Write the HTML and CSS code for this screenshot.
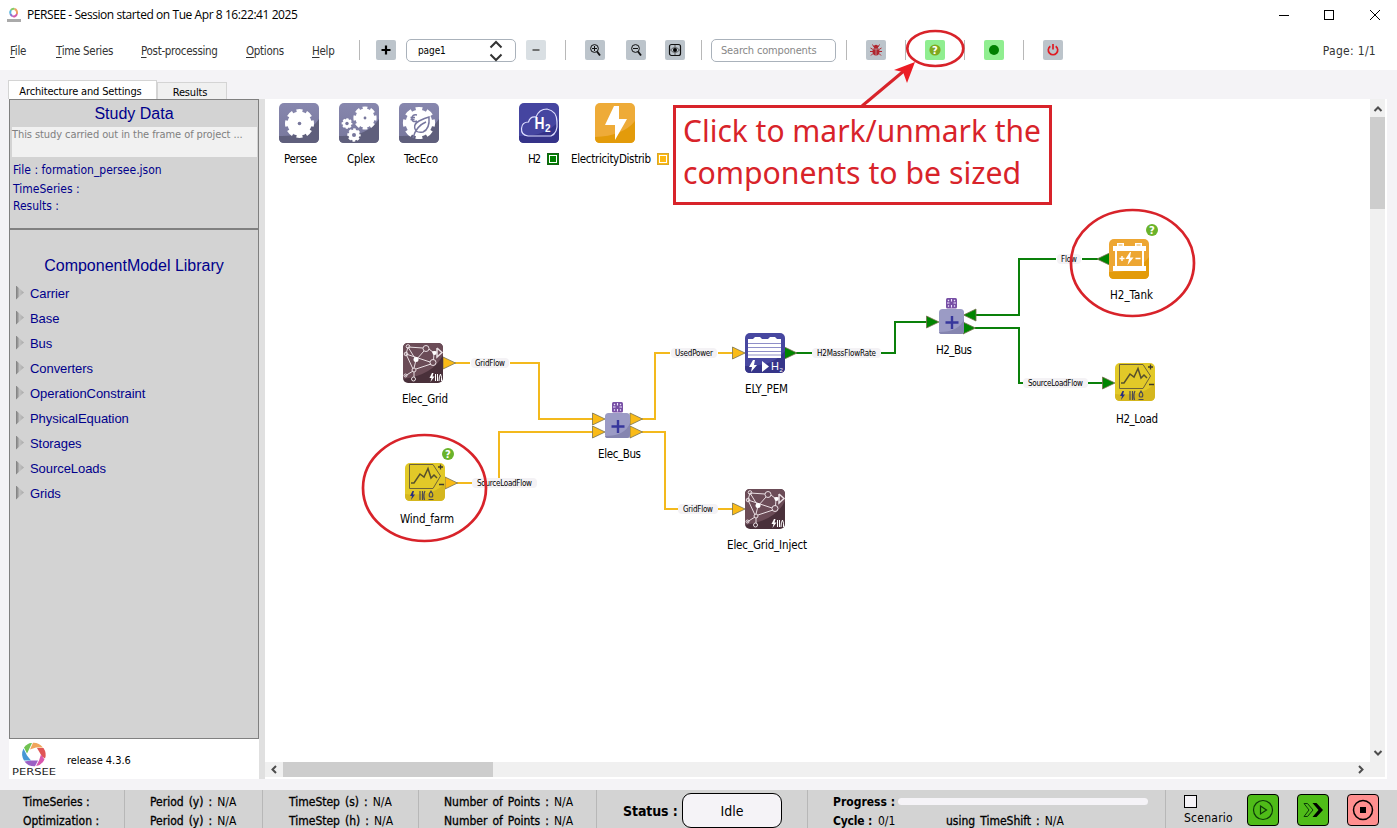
FILE: index.html
```html
<!DOCTYPE html>
<html lang="en">
<head>
<meta charset="utf-8">
<title>PERSEE</title>
<link rel="stylesheet" href="styles.css">
</head>
<body>
<div class="window">
  <header class="titlebar">
    <svg class="app-icon" width="16" height="18" viewBox="0 0 16 18"><path d="M4.500 8A3.600 4 0 0 1 5 4" stroke="#59b6df"/><path d="M5 4Q6.500 2.300 8.500 3" stroke="#86cc65"/><path d="M8.500 3Q11.500 4 11 8" stroke="#eda063"/><path d="M11 8Q9 11.500 6.500 10" stroke="#d45ba8"/><path d="M6.500 10Q5 9.500 4.500 8" stroke="#8a6fd0"/><path d="M1 14.500H15" stroke="#aaa" stroke-width="3"/></svg>
    <span class="title">PERSEE - Session started on Tue Apr 8 16:22:41 2025</span>
    <svg class="win-controls" width="104" height="12" viewBox="0 0 104 12" shape-rendering="crispEdges"><path d="M1 6.500H11M46.500 1.500H55.500V10.500H46.500Z"/><path d="M92 1L102 11M102 1L92 11" shape-rendering="auto"/></svg>
  </header>

  <nav class="toolbar">
    <div class="menus">
      <span class="m-file"><u>F</u>ile</span><span class="m-time"><u>T</u>ime Series</span><span class="m-post"><u>P</u>ost-processing</span><span class="m-opt"><u>O</u>ptions</span><span class="m-help"><u>H</u>elp</span>
    </div>
    <i class="sep s1"></i>
    <span class="btn"><svg width="20" height="20"><path d="M10 5.500V14.500M5.500 10H14.500" stroke="#000" stroke-width="2.200"/></svg></span>
    <div class="page-select"><span>page1</span><svg width="14" height="22" viewBox="0 0 14 22"><path d="M1.500 7.500L7 2L12.500 7.500M1.500 14.500L7 20L12.500 14.500" fill="none" stroke="#333" stroke-width="2"/></svg></div>
    <span class="btn dim"><svg width="20" height="20"><path d="M6.500 10H13.500" stroke="#555" stroke-width="1.600"/></svg></span>
    <i class="sep s2"></i>
    <span class="btn"><svg width="20" height="20"><g fill="none" stroke="#111"><circle cx="9.500" cy="8.500" r="3.900"/><path d="M12 11.500L15 15.500" stroke-width="1.800"/><path d="M7 8.500H12M9.500 6V11"/></g></svg></span>
    <span class="btn b-out"><svg width="20" height="20"><g fill="none" stroke="#111"><circle cx="9.500" cy="8.500" r="3.900"/><path d="M12 11.500L15 15.500" stroke-width="1.800"/><path d="M7 8.500H12"/></g></svg></span>
    <span class="btn b-fit"><svg width="20" height="20"><rect x="4.500" y="4.500" width="11" height="11" rx="2" fill="none" stroke="#111" stroke-width="1.200"/><path d="M5.500 10Q10 5 14.500 10Q10 15 5.500 10M10 5V7M10 13V15" fill="none" stroke="#444" stroke-width=".8"/><circle cx="10" cy="10" r="2"/></svg></span>
    <i class="sep s3"></i>
    <div class="search"><span>Search components</span></div>
    <i class="sep s4"></i>
    <span class="btn b-tool"><svg width="20" height="20"><g stroke="#b0252e" fill="none"><path d="M8 7L6.500 4.500M12 7L13.500 4.500M7 9.500L4.500 8M13 9.500L15.500 8M7 11.500H4M13 11.500H16M7 13.500L5 15.500M13 13.500L15 15.500"/></g><ellipse cx="10" cy="11.500" rx="3.500" ry="4" fill="#b0252e"/><circle cx="10" cy="7" r="2.200" fill="#b0252e"/><path d="M6.500 9H13.500M10 9V15" stroke="#bdbdc5" stroke-width=".6"/></svg></span>
    <i class="sep s5"></i>
    <span class="btn green b-tool"><svg width="20" height="20"><circle cx="10" cy="10" r="5.600" fill="#7fa91f"/><text class="qmark" x="10" y="13.500" fill="#fff">?</text></svg></span>
    <i class="sep s5"></i>
    <span class="btn green b-tool"><svg width="20" height="20"><circle cx="10" cy="10" r="5" fill="#008000"/></svg></span>
    <i class="sep s5"></i>
    <span class="btn b-tool"><svg width="20" height="20"><path d="M7.300 6.200A4.700 4.700 0 1 0 12.700 6.200M10 4V9.500" fill="none" stroke="#e01a22" stroke-width="1.700"/></svg></span>
    <span class="page-no">Page: 1/1</span>
  </nav>

  <main class="workspace">
    <aside class="sidebar">
      <div class="tabs"><span class="tab active">Architecture and Settings</span><span class="tab">Results</span></div>
      <section class="study">
        <h2>Study Data</h2>
        <div class="desc">This study carried out in the frame of project ...</div>
        <p class="p-file">File : formation_persee.json</p>
        <p class="p-ts">TimeSeries :</p>
        <p class="p-res">Results :</p>
      </section>
      <section class="library">
        <h2>ComponentModel Library</h2>
        <ul>
          <li>Carrier</li><li>Base</li><li>Bus</li><li>Converters</li><li>OperationConstraint</li><li>PhysicalEquation</li><li>Storages</li><li>SourceLoads</li><li>Grids</li>
        </ul>
      </section>
      <div class="release">
        <svg width="48" height="38" viewBox="0 0 48 38">
          <g transform="translate(25 14.500)">
            <path d="M-10 -7Q-6 -12 -2 -11.500L-6 -3L-7 -1Z" fill="#70c252"/>
            <path d="M-1 -11.700Q5 -12 9 -7H2L-4 -5Z" fill="#f0a55b"/>
            <path d="M9.500 -6.500Q13 -1 11 4L8 2L3 -6.500Z" fill="#e05555"/>
            <path d="M10.500 5Q8 10.500 2 11.500L5 6L7 0Z" fill="#d957ad"/>
            <path d="M1 11.700Q-6 12 -9.500 7L-3 6H4Z" fill="#9b60c4"/>
            <path d="M-10 6Q-13.500 0 -10.500 -6L-7 1L-3 6Z" fill="#4697d5"/>
          </g>
          <text class="brand" x="3" y="35" textLength="44" lengthAdjust="spacingAndGlyphs">PERSEE</text>
        </svg>
        <span>release 4.3.6</span>
      </div>
    </aside>
    <div class="splitter"></div>

    <section class="canvas">
      <svg class="diagram" viewBox="265 99 1105 663">
        <defs>
          <linearGradient id="gray" x2="0" y2="1"><stop offset="0" stop-color="#8787ae"/><stop offset="1" stop-color="#77779c"/></linearGradient>
          <g id="tile-gray"><rect width="40" height="40" rx="5" fill="url(#gray)"/><path d="M0 33Q28 34 40 16V35Q40 40 35 40H5Q0 40 0 35Z" fill="#5f5f7c"/></g>
          <g id="gear"><circle r="12" fill="#fff"/><circle r="12" fill="none" stroke="#fff" stroke-width="5" pathLength="16" stroke-dasharray="1.200 .8" stroke-dashoffset=".6"/><circle r="1.800" fill="#77779c"/></g>
          <g id="plug"><path d="M2.500 0L0 5H2L1 9L5 3.500H3L4 0Z"/></g>
          <g id="grid">
            <rect width="40" height="40" rx="5" fill="#49303a"/><path d="M0 36Q30 32 40 12V5Q40 0 35 0H5Q0 0 0 5Z" fill="#6b4c57"/>
            <g fill="none" stroke="#e9dfe3" stroke-width="1"><path d="M5 4L20 5M26 6L31 10L30.500 17M28 21L13 26M10 26L3 11L5 4M3 11L27 19M21 8L13 17L11 25M10 28L2 33M5 4L13 17M11 29V34"/><circle cx="23" cy="5.500" r="3"/><circle cx="30" cy="19.500" r="3"/><circle cx="11" cy="27" r="2"/><circle cx="10.500" cy="36" r="2"/><circle cx="3" cy="11" r="1.800"/><circle cx="5" cy="3.500" r="1.800"/><circle cx="2.500" cy="32.500" r="1.500"/><path d="M34 5L39 9.500L34 14V5M29 9H34" stroke-width="1.500"/></g>
            <circle cx="13" cy="16.500" r="2.500" fill="#fff"/><circle cx="31.500" cy="10" r="2" fill="#fff"/><use href="#plug" x="26.500" y="30" fill="#fff"/><path d="M32.500 31V38M34.500 31V38M36 38Q36 33 37.500 31Q39 34 38.500 38" stroke="#fff" fill="none"/>
          </g>
          <g id="load">
            <rect width="40" height="38" rx="5" fill="#e2c928"/><path d="M0 31Q28 34 40 20V33Q40 38 35 38H5Q0 38 0 33Z" fill="#d5b71e"/>
            <path d="M4.500 1.500H28L35.500 13L28 25.500H4.500Z" fill="none" stroke="#6d6239"/><path d="M6 20H9L15 11L19 14L23 5.500L26 15L29 12L32 15" fill="none" stroke="#57502c" stroke-width="1.500"/>
            <path d="M33 4H38M35.500 1.500V6.500M34 21.500H39" stroke="#3d3930" stroke-width="1.300"/>
            <use href="#plug" x="5" y="28" fill="#282d83"/><path d="M15 28V37M17.500 28V37M20 28Q18 32 19.500 37M23.500 36.500H28.500M25 34Q23 32 26 28Q29 32 27 34Z" fill="none" stroke="#4c4a55" stroke-width="1.200"/>
          </g>
          <g id="bus">
            <rect width="25" height="25" rx="3.500" fill="#9b9bc5"/><path d="M0 23Q20 23 25 10V22Q25 25 22 25H3Q0 25 0 23Z" fill="#8585b0"/><path d="M13 7V20M6.500 13.500H19.500" stroke="#37379c" stroke-width="2.400"/>
            <rect x="7" y="-11" width="11" height="10.500" rx="1.500" fill="#7850a5"/><path d="M12.500 -10V-7.500M12.500 -4V-1.500M8 -6H10.500M14.500 -6H17M9 -9L10 -8M16 -9L15 -8M9 -2.500L10 -3.500M16 -2.500L15 -3.500" stroke="#eee4ff" stroke-width="1.100"/>
          </g>
          <g id="help"><circle r="6" fill="#6ab32b"/><text class="qmark" y="3.800" fill="#fff">?</text></g>
          <path id="port" d="M0 -6L12.500 0L0 6Z"/>
        </defs>

        <g class="wire elec">
          <path d="M455 363H539V419H593"/><path d="M457 483H499V432H593"/><path d="M642 419H655V353H733"/><path d="M642 432H665V509H733"/>
        </g>
        <g class="wire h2">
          <path d="M796 353H895V322H927"/><path d="M976 315H1019V259H1098"/><path d="M975 328H1019V383H1103"/>
        </g>
        <g fill="#f4f2f5">
          <path d="M470 358H510V368H470ZM472 478H537V489H472ZM670 348H718V358H670ZM678 504H718V514H678ZM812 348H881V358H812ZM1056 254H1082V264H1056ZM1023 378H1088V388H1023Z" fill="#fff"/>
          <rect x="471" y="358" width="38" height="10" rx="4"/><rect x="472" y="478" width="65" height="10" rx="4"/><rect x="671" y="348" width="46" height="10" rx="4"/><rect x="678" y="504" width="40" height="10" rx="4"/><rect x="812" y="348" width="69" height="10" rx="4"/><rect x="1057" y="254" width="24" height="10" rx="4"/><rect x="1023" y="378" width="65" height="10" rx="4"/>
        </g>
        <g class="flow">
          <text x="475" y="366" textLength="30">GridFlow</text><text x="477" y="486" textLength="55">SourceLoadFlow</text><text x="675" y="356" textLength="38">UsedPower</text><text x="683" y="512" textLength="30">GridFlow</text><text x="817" y="356" textLength="59">H2MassFlowRate</text><text x="1061" y="262" textLength="16">Flow</text><text x="1028" y="386" textLength="55">SourceLoadFlow</text>
        </g>
        <g class="port elec-port">
          <use href="#port" x="443" y="363"/><use href="#port" x="445" y="483"/><use href="#port" x="592.500" y="419"/><use href="#port" x="592.500" y="432"/><use href="#port" x="630" y="419"/><use href="#port" x="630" y="432"/><use href="#port" x="732.500" y="353"/><use href="#port" x="732.500" y="509"/>
        </g>
        <g class="port h2-port">
          <use href="#port" x="784.500" y="353"/><use href="#port" x="926.500" y="322"/><use href="#port" x="963" y="328"/><use href="#port" x="1102.500" y="383"/><use href="#port" transform="translate(976 315) scale(-1 1)"/><use href="#port" transform="translate(1109.500 259) scale(-1 1)"/>
        </g>

        <g transform="translate(279 103)"><use href="#tile-gray"/><use href="#gear" x="20.500" y="20.500"/></g>
        <g transform="translate(339 103)"><use href="#tile-gray"/><use href="#gear" transform="translate(26 15) scale(.8)"/><use href="#gear" transform="translate(8 20.500) scale(.37)"/><use href="#gear" transform="translate(15 32) scale(.46)"/><circle cx="8" cy="20.500" r="1.700" fill="#77779c"/><circle cx="15" cy="32" r="2" fill="#77779c"/></g>
        <g transform="translate(399 103)"><use href="#tile-gray"/><use href="#gear" transform="translate(20 20) scale(1.110)"/><circle cx="20" cy="20" r="5" fill="#fff"/><path d="M14 35Q17 23 27 19Q20 22 17 28Q13 22 20 18Q26 15 30 14Q31 26 24 29Q20 30 17 28M18 12Q13 11 13 15.500Q13 20 18 18M11.500 14.500H16M11.500 16.500H15.500" fill="none" stroke="#77779f" stroke-width="1.500"/></g>
        <g transform="translate(519 103)"><rect width="40" height="40" rx="5" fill="#4545a0"/><path d="M0 33Q26 34 40 18V35Q40 40 35 40H5Q0 40 0 35Z" fill="#353389"/><path d="M9 33Q2 32 2.500 25.500Q3 19 9.500 19Q11 13 17 14Q20 6 28 6Q38 8 38 19Q39 30 32 33Z" fill="none" stroke="#dedeff" stroke-width="1.200"/><text class="h2" x="15.500" y="26" font-size="17" textLength="10" lengthAdjust="spacingAndGlyphs">H</text><text class="h2" x="26" y="29" font-size="10" textLength="6">2</text></g>
        <g transform="translate(595 103)"><rect width="40" height="40" rx="5" fill="#eeab38"/><path d="M0 34Q28 33 40 18V35Q40 40 35 40H5Q0 40 0 35Z" fill="#e39b0a"/><path d="M19 3H24V16H32L20 37V22H10Z" fill="#fff"/></g>
        <rect x="547.500" y="153.500" width="11" height="11" class="swatch green-sw"/><rect x="549.500" y="155.500" width="7" height="7" fill="none" stroke="#fff"/>
        <rect x="657.500" y="153.500" width="11" height="11" class="swatch yellow-sw"/><rect x="659.500" y="155.500" width="7" height="7" fill="none" stroke="#fff"/>

        <use href="#grid" x="403" y="343"/><use href="#grid" x="745" y="489"/>
        <use href="#load" x="405" y="463"/><use href="#load" x="1115" y="363"/>
        <use href="#bus" x="605" y="413"/><use href="#bus" x="939" y="309"/>
        <g transform="translate(745 333)"><rect width="40" height="40" rx="5" fill="#4747a0"/><path d="M0 33Q28 34 40 18V35Q40 40 35 40H5Q0 40 0 35Z" fill="#363589"/><path d="M3 6H8L10 4H15L17 6H23L25 4H30L32 6H36V25H3Z" fill="#fff"/><path d="M3 10.500H36M3 14.500H36M3 18.500H36M3 22H36" stroke="#8f8fc8" stroke-width="1.200"/><path d="M8 27L4 34H7L6 39L12 32H9L10 27ZM17 28L24 33.500L17 39Z" fill="#fff"/><text class="h2 thin" x="26" y="37" font-size="11" textLength="8">H</text><text class="h2 thin" x="34.500" y="39" font-size="6">2</text></g>
        <g transform="translate(1109 239)"><rect width="40" height="40" rx="5" fill="#eda632"/><path d="M0 33Q28 34 40 18V35Q40 40 35 40H5Q0 40 0 35Z" fill="#e39b0a"/><path d="M4 7H8V4H15V7H26V4H33V7H37V12H35V27H37V32H4V27H6V12H4Z" fill="#fff"/><path d="M9.500 6H13.500M27.500 6H31.500" stroke="#e9aa42"/><path d="M8 12H33V27H8Z" fill="#eda632"/><path d="M13 17V22M10.500 19.500H15.500M26.500 19.500H31.500" stroke="#fff" stroke-width="1.400"/><path d="M21 13L16.500 20H20L18.500 26L24.500 18.500H21L22 13Z" fill="#fff"/></g>
        <use href="#help" x="448" y="454"/><use href="#help" x="1152" y="230"/>

        <g class="label">
          <text x="284" y="163" textLength="33">Persee</text><text x="347" y="163" textLength="28">Cplex</text><text x="404" y="163" textLength="34">TecEco</text><text x="528" y="163" textLength="13">H2</text><text x="571" y="163" textLength="80">ElectricityDistrib</text>
          <text x="402" y="403" textLength="46">Elec_Grid</text><text x="400" y="523" textLength="54">Wind_farm</text><text x="598" y="458" textLength="43">Elec_Bus</text><text x="745" y="393" textLength="43">ELY_PEM</text><text x="727" y="549" textLength="80">Elec_Grid_Inject</text><text x="936" y="354" textLength="36">H2_Bus</text><text x="1110" y="299" textLength="43">H2_Tank</text><text x="1116" y="423" textLength="42">H2_Load</text>
        </g>
      </svg>
      <div class="vscroll"><svg width="16" height="17"><path d="M4.500 11L8 7.500L11.500 11"/></svg><div class="thumb"></div><svg class="end" width="16" height="17"><path d="M4.500 6L8 9.500L11.500 6"/></svg></div>
      <div class="hscroll"><svg width="18" height="15"><path d="M11 4L7.500 7.500L11 11"/></svg><div class="thumb"></div><svg class="end" width="17" height="15"><path d="M7 4L10.500 7.500L7 11"/></svg></div>
    </section>
  </main>

  <footer class="status">
    <div class="cell c1"><div><b>TimeSeries :</b></div><div><b>Optimization :</b></div></div>
    <div class="cell c2"><div><b>Period (y) :</b> N/A</div><div><b>Period (y) :</b> N/A</div></div>
    <div class="cell c3"><div><b>TimeStep (s) :</b> N/A</div><div><b>TimeStep (h) :</b> N/A</div></div>
    <div class="cell c4"><div><b>Number of Points :</b> N/A</div><div><b>Number of Points :</b> N/A</div></div>
    <div class="cell c5"><strong>Status :</strong><span class="idle">Idle</span></div>
    <div class="cell c6"><div class="row"><strong>Progress :</strong><i class="bar"></i></div><div class="row"><strong class="cy">Cycle :</strong><span class="cyc">0/1</span><span class="shift"><b>using TimeShift :</b> N/A</span></div></div>
    <div class="cell c7">
      <div class="scenario"><i class="check"></i><span>Scenario</span></div>
      <span class="run"><svg width="30" height="30"><g fill="none" stroke="#0c3a08" stroke-width="1.200"><circle cx="15" cy="15" r="9.500"/><path d="M12.500 11L18.500 15L12.500 19Z"/></g></svg></span>
      <span class="run"><svg width="30" height="30"><path d="M6 8.500H9.500L15 15L9.500 21.500H6L11 15Z" fill="none" stroke="#0c3a08"/><path d="M14.500 8H18.500L25 15L18.500 22H14.500L20.500 15Z"/></svg></span>
      <span class="run stop"><svg width="30" height="30"><circle cx="15" cy="15" r="9.500" fill="none" stroke="#000" stroke-width="1.500"/><rect x="12" y="12" width="6" height="6"/></svg></span>
    </div>
  </footer>

  <svg class="annotations" viewBox="0 0 1397 828">
    <g fill="none" stroke="#d8232a">
      <ellipse cx="935.300" cy="48.500" rx="28" ry="17.500" stroke-width="2.700"/>
      <ellipse cx="1132.500" cy="263" rx="61.500" ry="53" stroke-width="2.700"/>
      <ellipse cx="424.500" cy="488" rx="61.500" ry="53" stroke-width="2.700"/>
      <rect x="674.500" y="106.500" width="376" height="97" fill="#fff" stroke-width="3"/>
      <path d="M862 106L905 70" stroke-width="3"/>
    </g>
    <path d="M915 62L894 70L903 72L907 83Z" fill="#ec1c24"/>
    <g class="note"><text x="683" y="142" textLength="358" lengthAdjust="spacingAndGlyphs">Click to mark/unmark the</text><text x="683" y="184" textLength="338" lengthAdjust="spacingAndGlyphs">components to be sized</text></g>
  </svg>
</div>
</body>
</html>
```
FILE: styles.css
```css
* { box-sizing: border-box; }
body { margin: 0; background: #f4f3f6; color: #000; font: 11px/14px "DejaVu Sans Condensed", "DejaVu Sans", sans-serif; font-stretch: condensed; }
svg { display: block; flex: none; }
h2, p, ul { margin: 0; padding: 0; font-weight: normal; }
span { white-space: nowrap; }
.window { position: relative; width: 1397px; height: 828px; overflow: hidden; display: flex; flex-direction: column; }

.titlebar { height: 30px; flex: none; background: #fff; display: flex; align-items: center; padding: 0 15px 0 6px; }
.app-icon { fill: none; stroke-width: 2; }
.title { font: 12px/16px "Open Sans", "Noto Sans", sans-serif; margin-left: 5px; letter-spacing: -.43px; }
.win-controls { margin-left: auto; fill: none; stroke: #000; }

.toolbar { height: 40px; flex: none; background: #fff; display: flex; align-items: center; padding-left: 10px; color: #333; }
.menus { display: flex; gap: 28px; width: 349px; font-size: 11.5px; letter-spacing: -.3px; padding-top: 2px; }
.menus u { text-underline-offset: 2px; }
.m-file { width: 18px; } .m-time { width: 57px; } .m-post { width: 77px; } .m-opt { width: 38px; } .m-help { width: 22px; }
.sep { width: 1px; height: 20px; background: #b8b8b8; flex: none; }
.s1 { margin-right: 16px; } .s2 { margin: 0 19px; } .s3 { margin: 0 9px 0 16px; } .s4 { margin-left: 10px; } .s5 { margin-left: 19px; }
.btn { width: 20px; height: 20px; border-radius: 2px; background: #bcc4cb; flex: none; }
.dim { background: #d9dfe3; }
.green { background: #90ee90; }
.b-out { margin-left: 21px; } .b-fit { margin-left: 19px; } .b-tool { margin-left: 19px; }
.page-select { width: 110px; height: 23px; margin: 1px 10px 0; border: 1px solid #aab2bb; border-radius: 5px; display: flex; align-items: center; justify-content: space-between; padding: 0 12px 0 11px; font-size: 10px; letter-spacing: -.1px; color: #000; }
.search { width: 125px; height: 23px; border: 1px solid #aab2bb; border-radius: 5px; padding: 4px 9px; line-height: 13px; letter-spacing: -.17px; color: #888; }
.page-no { margin: 2px 21px 0 auto; font-size: 12px; letter-spacing: .3px; }
.qmark { font: bold 10px "DejaVu Sans", sans-serif; text-anchor: middle; }

.workspace { height: 720px; flex: none; display: flex; padding-left: 8px; }
.sidebar { width: 251px; display: flex; flex-direction: column; }
.tabs { height: 29px; display: flex; align-items: flex-end; letter-spacing: -.15px; }
.tab { height: 17px; width: 70px; border: 1px solid #d4d4d4; border-bottom: 0; background: #f0f0f0; text-align: center; line-height: 19px; padding-right: 4px; }
.tab.active { width: 149px; height: 19px; background: #fff; line-height: 21px; }
.study, .library { margin-left: 1px; border: 1px solid #808080; background: #d3d3d3; color: #00008b; }
.study { height: 130px; }
.study h2, .library h2 { font: 16px/18px "Liberation Sans", Arial, sans-serif; text-align: center; }
.study h2 { height: 27px; padding-top: 5px; }
.desc { margin: 0 1px 0 2px; height: 30px; background: #f1f1f1; color: #808080; line-height: 15px; letter-spacing: -.08px; white-space: nowrap; }
.study p { padding-left: 3px; line-height: 16px; font-size: 12px; }
.p-file { padding-top: 5px; } .p-ts { padding-top: 3px; } .p-res { padding-top: 1px; }
.library { height: 510px; padding-top: 27px; }
.library ul { list-style: none; margin-top: 6px; }
.library li { display: flex; align-items: center; height: 25px; padding-left: 6px; font: 13px/25px "Liberation Sans", Arial, sans-serif; letter-spacing: -.06px; }
.library li::before { content: ""; width: 8px; height: 14px; margin: -2px 6px 0 0; background: linear-gradient(90deg, #858585 10%, #c2c2c2 45%, #a8a8a8); clip-path: polygon(0 0, 100% 50%, 0 100%); }
.release { margin-left: 1px; height: 40px; background: #fff; display: flex; align-items: center; gap: 10px; }
.release span { padding-top: 3px; letter-spacing: -.05px; }
.brand { font: 9px "DejaVu Sans", sans-serif; fill: #222; }
.splitter { width: 6px; height: 680px; margin-top: 29px; background: #e0e0e0; }

.canvas { width: 1122px; height: 680px; margin-top: 29px; background: #fff; display: grid; grid-template: 663px 15px / 1105px 15px; }
.diagram { width: 1105px; height: 663px; }
.wire { fill: none; stroke-width: 2; }
.elec { stroke: #f3b91d; }
.h2 { stroke: #0a800a; }
text.h2 { stroke: none; fill: #fff; font-family: "Liberation Sans", Arial, sans-serif; font-weight: bold; }
text.thin { font-weight: normal; }
.port { stroke: #77714f; stroke-width: .8; }
.elec-port { fill: #fabb17; }
.h2-port { fill: #008500; }
.flow { font-size: 8px; }
.label { font-size: 11.5px; }
.green-sw { fill: #008000; stroke: #176017; }
.yellow-sw { fill: #fdb913; stroke: #d8a82a; }
.vscroll, .hscroll { background: #f0f0f0; display: flex; }
.vscroll { flex-direction: column; padding-top: 1px; }
.vscroll .thumb { height: 92px; background: #cdcdcd; }
.hscroll { grid-column: 1 / 3; }
.hscroll .thumb { width: 210px; background: #cdcdcd; }
.vscroll .end { margin-top: auto; }
.hscroll .end { margin-left: auto; margin-right: 16px; }
.vscroll path, .hscroll path { fill: none; stroke: #4d4d4d; stroke-width: 2; }

.status { height: 38px; flex: none; background: #d3d3d3; display: flex; overflow: hidden; font-size: 12px; }
.cell { height: 38px; flex: none; line-height: 19px; padding-top: 3px; border-right: 1px solid #b7b7b7; white-space: nowrap; }
.cell b { font-weight: normal; -webkit-text-stroke: .3px #000; }
.c2, .c3, .c4, .shift { word-spacing: 1.6px; }
.c1 { width: 125px; padding-left: 23px; } .c2 { width: 138px; padding-left: 25px; } .c3 { width: 156px; padding-left: 26px; } .c4 { width: 178px; padding-left: 25px; }
.c5 { width: 211px; padding: 3px 0 0 26px; display: flex; font-size: 14px; }
.c5 strong { width: 59px; line-height: 36px; letter-spacing: -.1px; }
.idle { width: 100px; height: 35px; border: 1px solid #000; border-radius: 9px; background: #f5f3f7; text-align: center; line-height: 35px; }
.c6 { width: 358px; padding-left: 25px; }
.row { display: flex; align-items: center; height: 19px; }
.row strong { width: 60px; }
.row .cy { width: 40px; letter-spacing: -.2px; }
.bar { width: 250px; height: 7px; border-radius: 4px; background: #f5f3f7; margin: -2px 0 0 5px; }
.cyc { width: 18px; margin-left: 5px; }
.shift { margin-left: 50px; }
.c7 { border: 0; padding: 4px 0 0 18px; display: flex; }
.scenario { width: 63px; letter-spacing: .25px; line-height: 20px; }
.check { display: block; width: 13px; height: 13px; margin-top: 1px; border: 1px solid #000; background: #f5f3f7; }
.run { width: 32px; height: 32px; margin-right: 18px; border: 1px solid #000; border-radius: 4px; background: #4fbc18; }
.stop { background: #ff8f8f; }

.annotations { position: absolute; inset: 0; width: 1397px; height: 828px; pointer-events: none; }
.note { font: 31px "Noto Sans", "Open Sans", sans-serif; fill: #d8232a; }
```
